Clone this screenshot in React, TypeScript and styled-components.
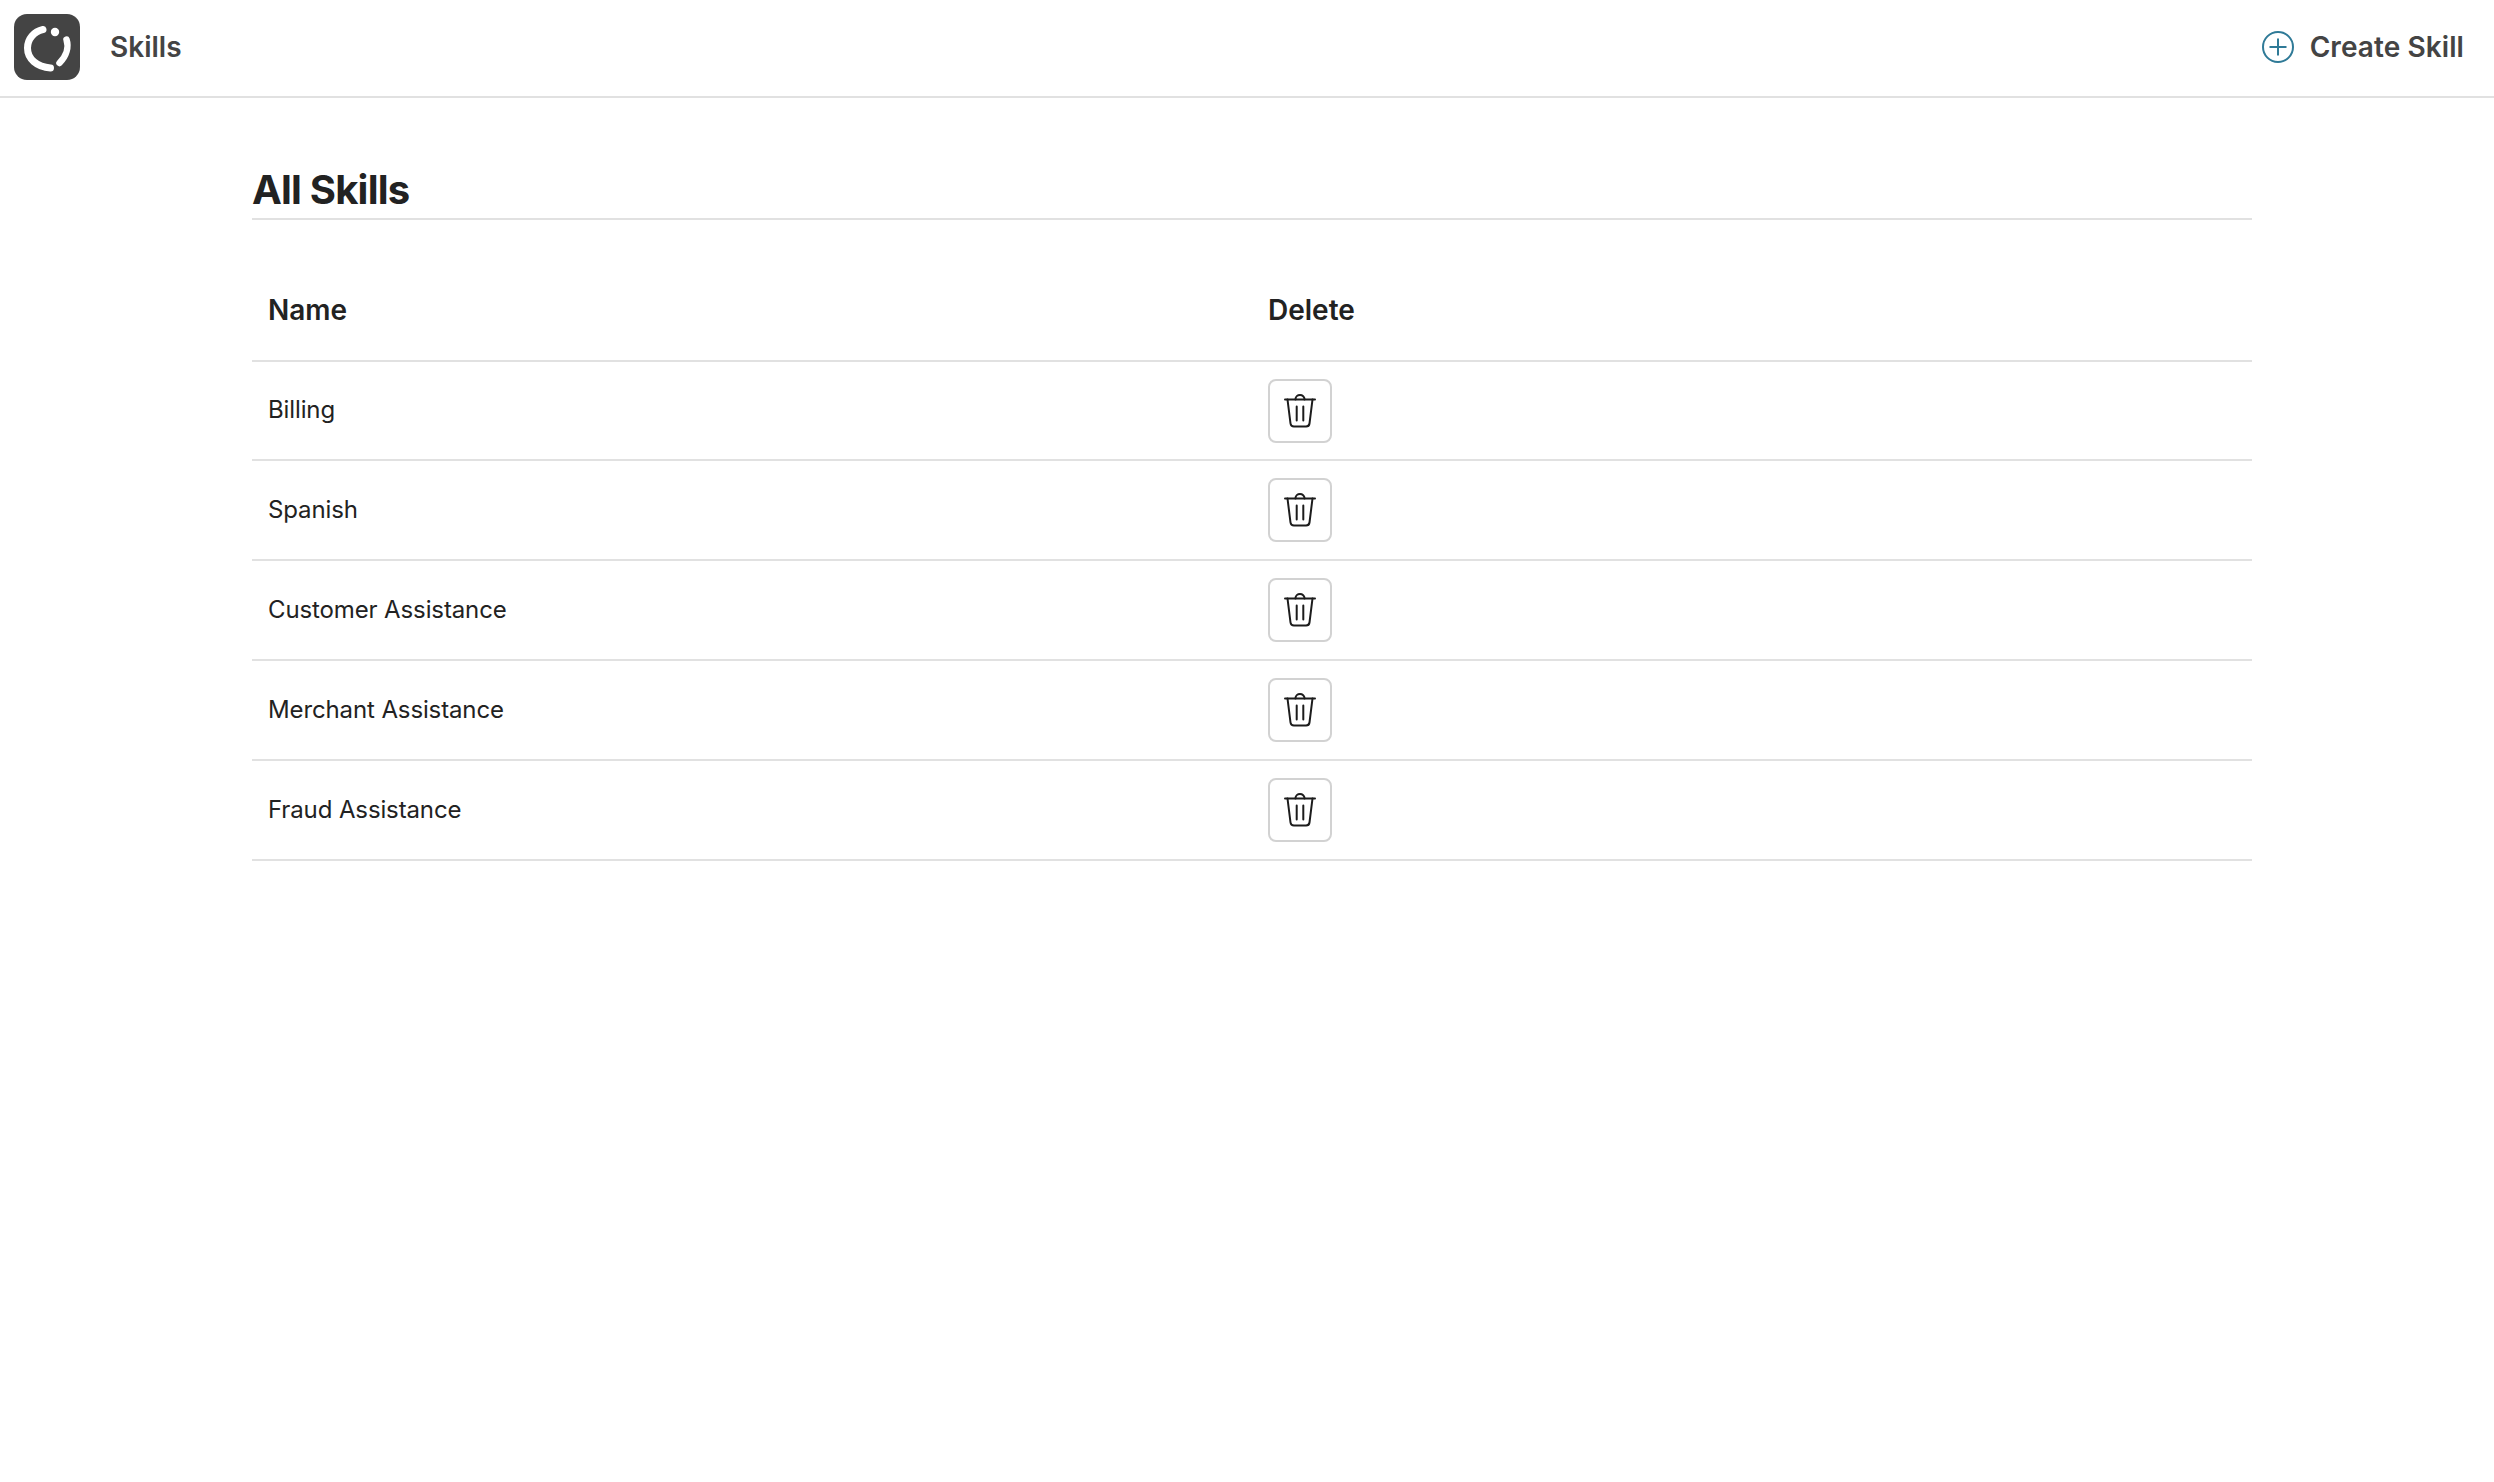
import React, { FC } from 'react';
import styled, { createGlobalStyle } from 'styled-components';

const skills = ['Billing', 'Spanish', 'Customer Assistance', 'Merchant Assistance', 'Fraud Assistance'];

const App: FC = () => {
    return (
        <>
            <GlobalStyle />
            <Header>
                <Brand>
                    <Logo viewBox="0 0 66 66">
                        <rect width="66" height="66" rx="13" fill="#444444" />
                        <path d="M29 15.5 C20 17.5 13.5 25 13.5 34 C13.5 45 23 53 36.5 54" fill="none" stroke="#fff" strokeWidth="7" strokeLinecap="round" />
                        <path d="M52.5 25.5 C55 33 52.5 42 45.5 49" fill="none" stroke="#fff" strokeWidth="6.5" strokeLinecap="round" />
                        <circle cx="41" cy="18" r="4.2" fill="#fff" />
                    </Logo>
                    <PageName>Skills</PageName>
                </Brand>
                <CreateButton>
                    <svg width="32" height="32" viewBox="0 0 32 32" fill="none" stroke="#2f7a97" strokeWidth="2">
                        <circle cx="16" cy="16" r="15" />
                        <path d="M16 7.5v17M7.5 16h17" />
                    </svg>
                    Create Skill
                </CreateButton>
            </Header>
            <Main>
                <Title>All Skills</Title>
                <Table>
                    <thead>
                        <tr>
                            <HeadCell>Name</HeadCell>
                            <HeadCell>Delete</HeadCell>
                        </tr>
                    </thead>
                    <tbody>
                        {skills.map(skill => (
                            <Row key={skill}>
                                <NameCell>{skill}</NameCell>
                                <Cell>
                                    <DeleteButton aria-label={`Delete ${skill}`}>
                                        <svg width="32" height="34" viewBox="0 0 32 34" fill="none" stroke="#1c1c1c" strokeWidth="2" strokeLinecap="round" strokeLinejoin="round">
                                            <path d="M1 5.5h30" />
                                            <path d="M11.5 5.5V5a4.5 4 0 0 1 9 0v.5" />
                                            <path d="M3.5 5.5l3 24a3.5 3.5 0 0 0 3.5 3h12a3.5 3.5 0 0 0 3.5-3l3-24" />
                                            <path d="M12.7 12.5v14M19.3 12.5v14" />
                                        </svg>
                                    </DeleteButton>
                                </Cell>
                            </Row>
                        ))}
                    </tbody>
                </Table>
            </Main>
        </>
    );
};

const GlobalStyle = createGlobalStyle`
    html, body {
        margin: 0;
        padding: 0;
        background: #ffffff;
        font-family: Inter, "Liberation Sans", sans-serif;
        color: #222222;
    }
`;

const Header = styled.header`
    display: flex;
    align-items: center;
    justify-content: space-between;
    box-sizing: border-box;
    height: 98px;
    padding: 0 30px 2px 14px;
    border-bottom: 2px solid #e1e1e1;
`;

const Brand = styled.div`
    display: flex;
    align-items: center;
    gap: 30px;
`;

const Logo = styled.svg`
    display: block;
    width: 66px;
    height: 66px;
`;

const PageName = styled.span`
    font-size: 28px;
    font-weight: 600;
    color: #444444;
`;

const CreateButton = styled.button`
    display: flex;
    align-items: center;
    gap: 16px;
    padding: 0;
    border: 0;
    background: none;
    font-family: inherit;
    font-size: 28px;
    font-weight: 600;
    letter-spacing: 0.08px;
    color: #444444;
`;

const Main = styled.main`
    box-sizing: border-box;
    width: 2000px;
    margin-left: 252px;
    padding-top: 64px;
`;

const Title = styled.h1`
    margin: 0;
    height: 56px;
    border-bottom: 2px solid #e1e1e1;
    font-size: 40px;
    line-height: 56px;
    font-weight: 700;
    letter-spacing: -0.8px;
    color: #222222;
`;

const Table = styled.table`
    width: 100%;
    margin-top: 30px;
    border-collapse: collapse;
    table-layout: fixed;
`;

const HeadCell = styled.th`
    box-sizing: border-box;
    height: 111px;
    padding: 10px 16px 0;
    border-bottom: 2px solid #e1e1e1;
    font-size: 28px;
    font-weight: 600;
    text-align: left;
    color: #222222;
`;

const Cell = styled.td`
    box-sizing: border-box;
    height: 100px;
    padding: 0 16px;
    border-bottom: 2px solid #e1e1e1;
    font-size: 24px;
    letter-spacing: -0.12px;
    color: #222222;
`;

const NameCell = styled(Cell)`
    padding-bottom: 2px;
`;

const Row = styled.tr`
    &:first-child td {
        height: 99px;
    }
`;

const DeleteButton = styled.button`
    display: flex;
    align-items: center;
    justify-content: center;
    box-sizing: border-box;
    width: 64px;
    height: 64px;
    padding: 0;
    border: 2px solid #d2d2d2;
    border-radius: 8px;
    background: #ffffff;
`;

export default App;
